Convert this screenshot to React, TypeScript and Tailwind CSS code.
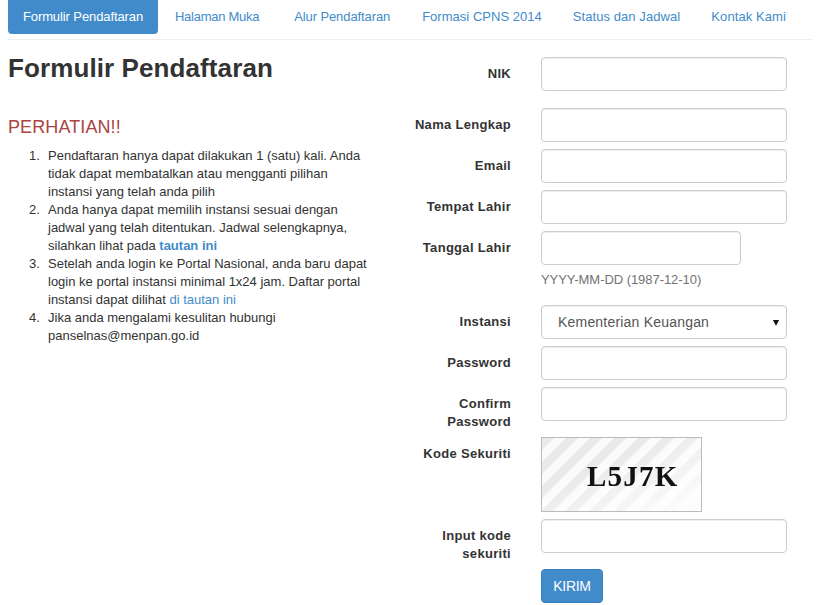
const navItems = [
  { label: 'Halaman Muka', className: 'mr-[3px] tracking-[-0.27px]' },
  { label: 'Alur Pendaftaran', className: 'tracking-[-0.1px]' },
  { label: 'Formasi CPNS 2014', className: 'tracking-[0.02px]' },
  { label: 'Status dan Jadwal', className: '-ml-[1px] tracking-[0.08px]' },
  { label: 'Kontak Kami', className: '-ml-[1px] tracking-[0.08px]' },
]

const inputClass = 'block h-[34px] w-[246px] rounded border border-[#ccc] bg-white shadow-[inset_0_1px_1px_rgba(0,0,0,0.075)]'

function Row({ label, className, children }: { label: string; className?: string; children: React.ReactNode }) {
  return (
    <div className={`flex ${className ?? ''}`}>
      <label className="w-[103px] pt-[8px] text-right text-[13px] font-bold leading-[18px] tracking-[0.3px] text-[#333]">
        {label}
      </label>
      <div className="ml-[30px]">{children}</div>
    </div>
  )
}

function Captcha() {
  return (
    <div className="relative h-[75px] w-[161px] overflow-hidden border border-[#bbb]">
      <svg className="absolute inset-0 h-full w-full" viewBox="0 0 159 73">
        <defs>
          <pattern id="stripes" width="17" height="17" patternUnits="userSpaceOnUse" patternTransform="rotate(45)">
            <rect width="17" height="17" fill="#fbfbfb" />
            <rect width="8.5" height="17" fill="#e9e9e9" />
          </pattern>
          <linearGradient id="fade" x1="0" y1="0" x2="1" y2="1">
            <stop offset="0.35" stopColor="#fff" stopOpacity="0" />
            <stop offset="0.9" stopColor="#fff" stopOpacity="0.85" />
          </linearGradient>
        </defs>
        <rect width="159" height="73" fill="url(#stripes)" />
        <rect width="159" height="73" fill="url(#fade)" />
      </svg>
      <span className="absolute left-[45px] top-[22px] font-['Liberation_Serif',serif] text-[29px] font-bold leading-[32px] tracking-[1.2px] text-[#111] blur-[0.4px]">
        L5J7K
      </span>
    </div>
  )
}

const items = [
  <>
    Pendaftaran hanya dapat dilakukan 1 (satu) kali. Anda tidak dapat membatalkan atau mengganti pilihan instansi yang
    telah anda pilih
  </>,
  <>
    Anda hanya dapat memilih instansi sesuai dengan jadwal yang telah ditentukan. Jadwal selengkapnya, silahkan lihat
    pada <a className="font-bold text-[#428bca]">tautan ini</a>
  </>,
  <>
    Setelah anda login ke Portal Nasional, anda baru dapat login ke portal instansi minimal 1x24 jam. Daftar portal
    instansi dapat dilihat <a className="text-[#428bca]">di tautan ini</a>
  </>,
  <>Jika anda mengalami kesulitan hubungi panselnas@menpan.go.id</>,
]

export default function App() {
  return (
    <div className="h-[605px] w-[820px] overflow-hidden bg-white font-['Liberation_Sans',Arial,sans-serif] text-[13px] leading-[18px] text-[#333]">
      <nav className="mx-[8px] flex h-[40px] items-start gap-[2px] border-b border-[#eee]">
        <a className="flex h-[34px] w-[150px] items-center justify-center rounded-b bg-[#428bca] tracking-[-0.1px] text-white">
          Formulir Pendaftaran
        </a>
        {navItems.map((item) => (
          <a key={item.label} className={`flex h-[34px] items-center px-[15px] text-[#428bca] ${item.className}`}>
            {item.label}
          </a>
        ))}
      </nav>

      <div className="flex">
        <section className="w-[375px] pl-[8px]">
          <h1 className="mt-[14px] text-[26px] font-bold leading-[29px] tracking-[0.1px] text-[#333]">
            Formulir Pendaftaran
          </h1>
          <h4 className="mt-[34px] text-[18px] leading-[20px] tracking-[0.1px] text-[#a94442]">PERHATIAN!!</h4>
          <ol className="mt-[10px] pl-[21px]">
            {items.map((item, i) => (
              <li key={i} className="flex">
                <span className="w-[19px] shrink-0">{i + 1}.</span>
                <div className="w-[320px]">{item}</div>
              </li>
            ))}
          </ol>
        </section>

        <form className="w-[445px] pl-[33px] pt-[17px]">
          <Row label="NIK" className="mb-[17px]">
            <input className={inputClass} />
          </Row>
          <Row label="Nama Lengkap" className="mb-[7px]">
            <input className={inputClass} />
          </Row>
          <Row label="Email" className="mb-[7px]">
            <input className={inputClass} />
          </Row>
          <Row label="Tempat Lahir" className="mb-[7px]">
            <input className={inputClass} />
          </Row>
          <Row label="Tanggal Lahir" className="mb-[7px]">
            <input className={`${inputClass} !w-[200px]`} />
            <p className="mb-[9px] mt-[6px] tracking-[-0.05px] text-[#737373]">YYYY-MM-DD (1987-12-10)</p>
          </Row>
          <Row label="Instansi" className="mb-[7px]">
            <div className={`${inputClass} relative flex items-center pl-[16px] text-[14px] tracking-[0.2px] text-[#555]`}>
              Kementerian Keuangan
              <svg className="absolute right-[7px] top-[14px] h-[6px] w-[6px]" viewBox="0 0 6 6">
                <path d="M0 0H6L3 6Z" fill="#111" />
              </svg>
            </div>
          </Row>
          <Row label="Password" className="mb-[7px]">
            <input className={inputClass} />
          </Row>
          <Row label="Confirm Password" className="mb-[6px]">
            <input className={inputClass} />
          </Row>
          <Row label="Kode Sekuriti" className="mb-[7px]">
            <Captcha />
          </Row>
          <Row label="Input kode sekuriti" className="mb-[6px]">
            <input className={inputClass} />
          </Row>
          <div className="pl-[133px]">
            <button
              type="button"
              className="h-[34px] w-[62px] rounded border border-[#357ebd] bg-[#428bca] text-[14px] tracking-[-0.3px] text-white"
            >
              KIRIM
            </button>
          </div>
        </form>
      </div>
    </div>
  )
}
